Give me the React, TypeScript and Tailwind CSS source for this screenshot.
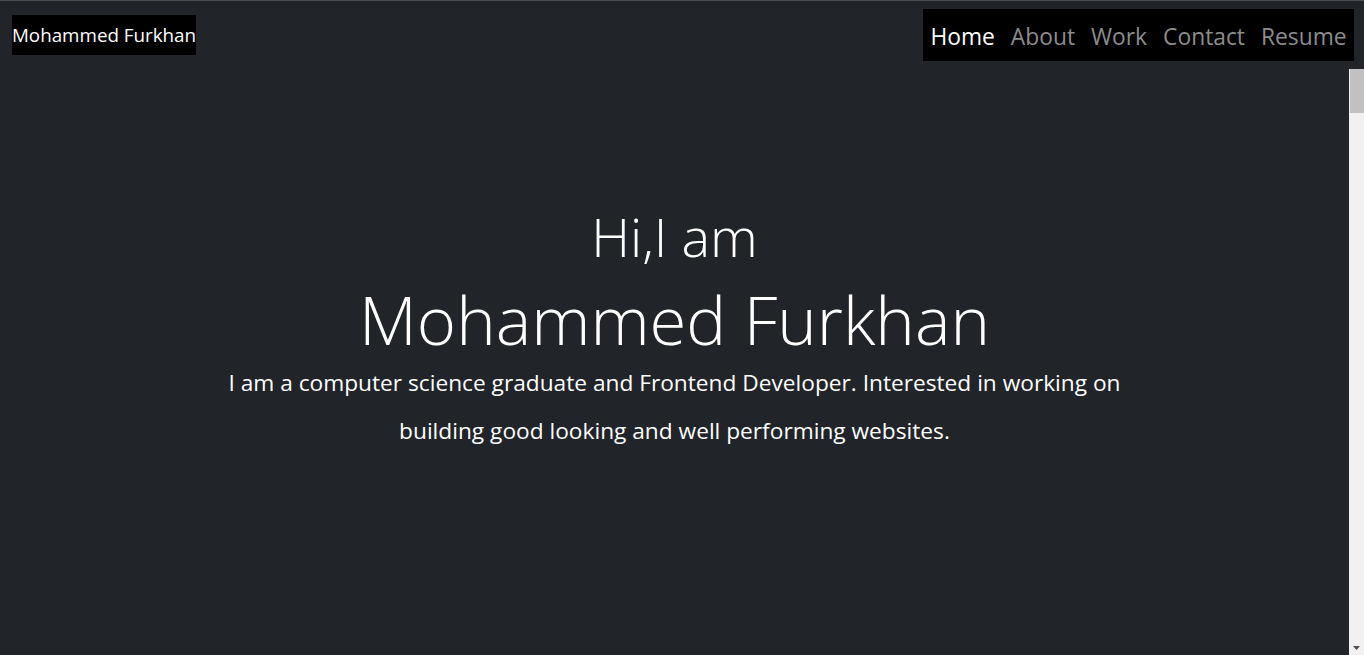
import React from "react";

const navItems = ["Home", "About", "Work", "Contact", "Resume"];

export default function App() {
    // page shell: header across full width, hero + inner scrollbar below
    return (
        <div className="h-[655px] w-full overflow-hidden bg-[#212529] border-t border-[#4b4e52] text-white font-['Open_Sans',sans-serif] flex flex-col">
            <header className="h-[68px] shrink-0 flex justify-between items-start">
                <div className="ml-3 mt-[14px] h-10 w-[184px] bg-black flex items-center justify-center text-[18.8px] leading-none whitespace-nowrap">
                    Mohammed Furkhan
                </div>
                <nav className="mr-[10px] mt-2 h-[52px] w-[431px] bg-black flex items-center justify-center">
                    {navItems.map((item, i) => (
                        <a
                            key={item}
                            href="#"
                            className={
                                i === 0
                                    ? "px-2 pt-[4px] text-[22.8px] leading-none text-white"
                                    : "px-2 pt-[4px] text-[22.8px] leading-none text-[#8c8c8c]"
                            }
                        >
                            {item}
                        </a>
                    ))}
                </nav>
            </header>

            <div className="flex-1 flex min-h-0">
                <main className="flex-1 flex flex-col items-center pt-[135px] text-center">
                    <h2 className="text-[54px] leading-[1.2] font-light">Hi,I am</h2>
                    <h1 className="text-[67px] leading-[1.2] font-light mt-[10px]">Mohammed Furkhan</h1>
                    <p className="text-[22.7px] leading-[48px]">
                        I am a computer science graduate and Frontend Developer. Interested in working on
                        <br />
                        building good looking and well performing websites.
                    </p>
                </main>

                {/* fake scrollbar of the inner section */}
                <div className="w-[15px] shrink-0 bg-[#f1f1f1] flex flex-col items-end">
                    <div className="w-[14px] h-[44px] bg-[#c1c1c1]" />
                    <div className="flex-1" />
                    <div className="w-[15px] h-[15px] flex items-center justify-center">
                        <svg width="7" height="4" viewBox="0 0 7 4">
                            <polygon points="0,0 7,0 3.5,4" fill="#505050" />
                        </svg>
                    </div>
                </div>
            </div>
        </div>
    );
}
